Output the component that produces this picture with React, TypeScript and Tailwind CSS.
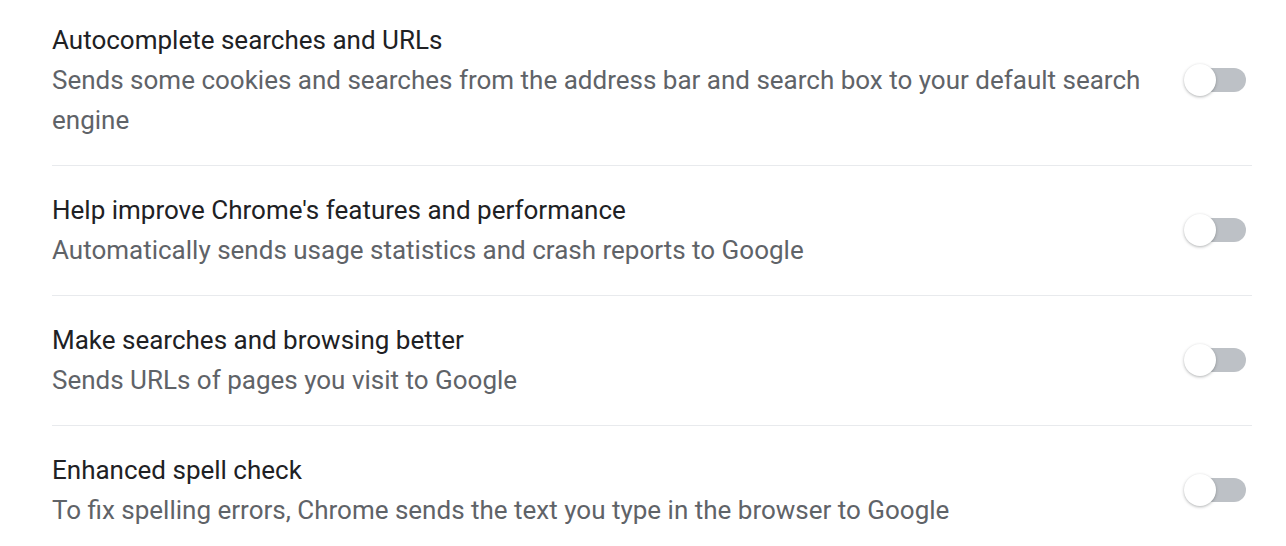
import React from "react";

// Settings rows, Chrome "Sync and Google services" style, all toggles off.
const rows = [
  {
    title: "Autocomplete searches and URLs",
    desc: "Sends some cookies and searches from the address bar and search box to your default search engine",
  },
  {
    title: "Help improve Chrome's features and performance",
    desc: "Automatically sends usage statistics and crash reports to Google",
  },
  {
    title: "Make searches and browsing better",
    desc: "Sends URLs of pages you visit to Google",
  },
  {
    title: "Enhanced spell check",
    desc: "To fix spelling errors, Chrome sends the text you type in the browser to Google",
  },
];

function Toggle() {
  return (
    <div className="relative w-[62px] h-8 shrink-0">
      <div className="absolute left-[6px] top-1 w-14 h-6 rounded-full bg-[#bdc1c6]" />
      <div className="absolute left-0 top-0 w-8 h-8 rounded-full bg-white shadow-[0_1px_3px_rgba(60,64,67,0.4)]" />
    </div>
  );
}

export default function App() {
  return (
    <div
      className="w-[1286px] h-[546px] bg-white overflow-hidden pl-[52px] pr-[34px] pt-[20px]"
      style={{ fontFamily: "Roboto, 'Liberation Sans', sans-serif" }}
    >
      {rows.map((r, i) => (
        <div
          key={r.title}
          className={`flex items-center pr-[6px] pb-[25px] ${i === 0 ? "" : "pt-6 border-t border-[#e8eaed]"}`}
        >
          <div className="flex-1 pr-5">
            <div className="text-[26px] leading-[40px] text-[#202124]">{r.title}</div>
            <div className="text-[26px] leading-[40px] text-[#5f6368]">{r.desc}</div>
          </div>
          <Toggle />
        </div>
      ))}
    </div>
  );
}
